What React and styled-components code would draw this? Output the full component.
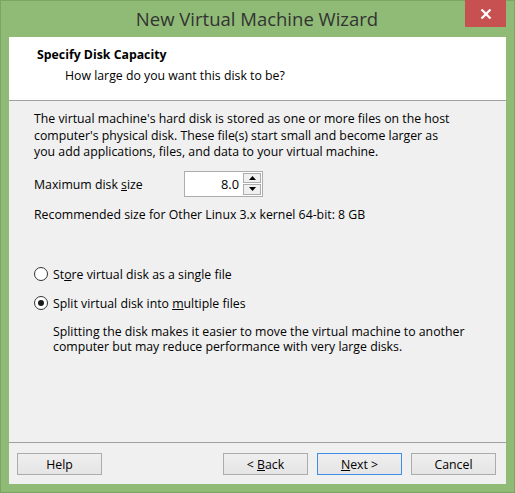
import React from 'react';
import styled, { createGlobalStyle } from 'styled-components';

const GlobalStyle = createGlobalStyle`
  html, body {
    margin: 0;
    padding: 0;
    background: #8fbb76;
  }
  * {
    box-sizing: border-box;
  }
`;

const FONT = `'Open Sans', 'Liberation Sans', sans-serif`;

const App = () => {
  return (
    <>
      <GlobalStyle />
      <Window>
        <TitleBar>
          <span />
          <Title>New Virtual Machine Wizard</Title>
          <CloseButton aria-label="Close">
            <svg width="12" height="10" viewBox="0 0 12 10">
              <path d="M1.5 0.5 L10.5 9.5 M10.5 0.5 L1.5 9.5" stroke="#fff" strokeWidth="2.2" />
            </svg>
          </CloseButton>
        </TitleBar>

        <Client>
          <Header>
            <HeaderTitle>Specify Disk Capacity</HeaderTitle>
            <HeaderSub>How large do you want this disk to be?</HeaderSub>
          </Header>

          <Body>
            <Paragraph>
              The virtual machine's hard disk is stored as one or more files on the host
              <br />
              computer's physical disk. These file(s) start small and become larger as
              <br />
              you add applications, files, and data to your virtual machine.
            </Paragraph>

            <SizeRow>
              <SizeLabel>
                Maximum disk <u>s</u>ize (GB):
              </SizeLabel>
              <SpinBox>
                <SpinValue>8.0</SpinValue>
                <SpinButtons>
                  <SpinButton>
                    <svg width="7" height="4" viewBox="0 0 7 4">
                      <path d="M3.5 0 L7 4 L0 4 Z" fill="#000" />
                    </svg>
                  </SpinButton>
                  <SpinButton>
                    <svg width="7" height="4" viewBox="0 0 7 4">
                      <path d="M0 0 L7 0 L3.5 4 Z" fill="#000" />
                    </svg>
                  </SpinButton>
                </SpinButtons>
              </SpinBox>
            </SizeRow>

            <Recommend>Recommended size for Other Linux 3.x kernel 64-bit: 8 GB</Recommend>

            <Options>
              <Option>
                <Radio />
                <span>
                  St<u>o</u>re virtual disk as a single file
                </span>
              </Option>
              <Option>
                <Radio checked />
                <span>
                  Split virtual disk into <u>m</u>ultiple files
                </span>
              </Option>
              <OptionNote>
                Splitting the disk makes it easier to move the virtual machine to another
                <br />
                computer but may reduce performance with very large disks.
              </OptionNote>
            </Options>
          </Body>

          <Footer>
            <Button>Help</Button>
            <Spacer />
            <Button>
              &lt;&nbsp;<u>B</u>ack
            </Button>
            <Button primary>
              <u>N</u>ext&nbsp;&gt;
            </Button>
            <Button>Cancel</Button>
          </Footer>
        </Client>
      </Window>
    </>
  );
};

export default App;

const Window = styled.div`
  width: 515px;
  height: 493px;
  display: flex;
  flex-direction: column;
  background: #8fbb76;
  border: 1px solid #7aa662;
  padding: 0 8px 8px;
  font-family: ${FONT};
`;

const TitleBar = styled.div`
  display: grid;
  grid-template-columns: 40px 1fr 41px;
  height: 37px;
  margin-top: -1px;
`;

const Title = styled.div`
  align-self: center;
  text-align: center;
  font-size: 18.5px;
  color: #333333;
  padding-bottom: 1px;
`;

const CloseButton = styled.div`
  height: 27px;
  background: #c75050;
  display: flex;
  align-items: center;
  justify-content: center;
`;

const Client = styled.div`
  flex: 1;
  display: flex;
  flex-direction: column;
  background: #f0f0f0;
  font-size: 12.3px;
  color: #000;
`;

const Header = styled.div`
  height: 64px;
  background: #ffffff;
  border-bottom: 1px solid #a0a0a0;
  padding: 9px 0 0 28px;
`;

const HeaderTitle = styled.div`
  font-weight: bold;
  line-height: 17px;
`;

const HeaderSub = styled.div`
  margin-top: 4px;
  padding-left: 28px;
  line-height: 17px;
`;

const Body = styled.div`
  flex: 1;
  padding: 10px 0 0 25px;
`;

const Paragraph = styled.div`
  line-height: 16.5px;
  white-space: nowrap;
`;

const SizeRow = styled.div`
  display: flex;
  align-items: flex-start;
  margin-top: 10px;
`;

const SizeLabel = styled.div`
  width: 125px;
  height: 25px;
  overflow: hidden;
  line-height: 17px;
  padding-top: 5px;
  margin-right: 25px;
  margin-bottom: -4px;
`;

const SpinBox = styled.div`
  display: flex;
  width: 79px;
  height: 26px;
  border: 1px solid #adadad;
  background: #ffffff;
`;

const SpinValue = styled.div`
  flex: 1;
  text-align: right;
  padding-right: 4px;
  line-height: 24px;
  font-size: 12.8px;
`;

const SpinButtons = styled.div`
  width: 19px;
  display: flex;
  flex-direction: column;
  gap: 1px;
  padding: 1px 1px 1px 0;
`;

const SpinButton = styled.div`
  flex: 1;
  display: flex;
  align-items: center;
  justify-content: center;
  background: #f0f0f0;
  border: 1px solid #adadad;
`;

const Recommend = styled.div`
  margin-top: 9px;
  line-height: 17px;
`;

const Options = styled.div`
  margin-top: 43px;
`;

const Option = styled.div`
  display: flex;
  align-items: center;
  gap: 5px;
  height: 17px;
  margin-bottom: 12px;
`;

const Radio = styled.span`
  width: 14px;
  height: 14px;
  border-radius: 50%;
  border: 1px solid #333333;
  background: #ffffff;
  display: flex;
  align-items: center;
  justify-content: center;

  &::after {
    content: '';
    display: ${(p) => (p.checked ? 'block' : 'none')};
    width: 6px;
    height: 6px;
    border-radius: 50%;
    background: #1a1a1a;
  }
`;

const OptionNote = styled.div`
  padding-left: 19px;
  margin-top: 3px;
  line-height: 15px;
  white-space: nowrap;
`;

const Footer = styled.div`
  display: flex;
  align-items: flex-start;
  gap: 9px;
  height: 42px;
  border-top: 1px solid #a0a0a0;
  padding: 10px 10px 0 8px;
`;

const Spacer = styled.div`
  flex: 1;
`;

const Button = styled.div`
  width: 85px;
  height: 22px;
  display: flex;
  align-items: center;
  justify-content: center;
  background: linear-gradient(#efefef, #e5e5e5);
  border: 1px solid ${(p) => (p.primary ? '#3c8ee6' : '#acacac')};
  font-size: 12.3px;
`;
